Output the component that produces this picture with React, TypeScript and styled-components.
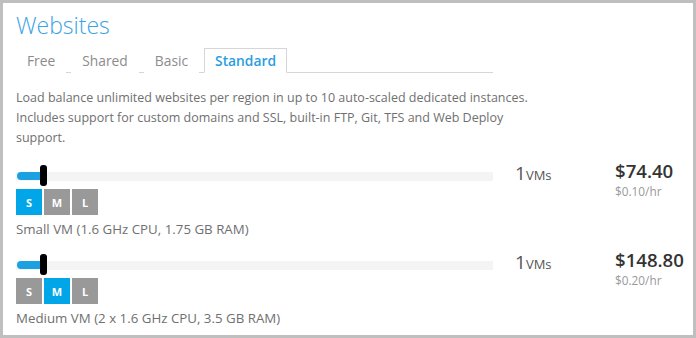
import styled, { createGlobalStyle } from "styled-components";

const GlobalStyle = createGlobalStyle`
	html, body {
		margin: 0;
		padding: 0;
		background: #ffffff;
	}
	body {
		font-family: "Open Sans", "Noto Sans", "Liberation Sans", sans-serif;
	}
`;

interface Plan {
	size: "S" | "M" | "L";
	label: string;
	price: string;
	hourly: string;
}

const plans: Plan[] = [
	{
		size: "S",
		label: "Small VM (1.6 GHz CPU, 1.75 GB RAM)",
		price: "$74.40",
		hourly: "$0.10/hr",
	},
	{
		size: "M",
		label: "Medium VM (2 x 1.6 GHz CPU, 3.5 GB RAM)",
		price: "$148.80",
		hourly: "$0.20/hr",
	},
];

const Panel = styled.div`
	box-sizing: border-box;
	width: 696px;
	height: 338px;
	border: 3px solid #bfbfbf;
	padding: 6px 0 0 13px;
	overflow: hidden;
`;

const Title = styled.h1`
	margin: 0;
	font-size: 23px;
	font-weight: 300;
	line-height: 32px;
	color: #3ba3e4;
`;

const Tabs = styled.ul`
	display: flex;
	gap: 5px;
	list-style: none;
	margin: 7px 0 0;
	padding: 0;
	width: 477px;
	border-bottom: 1px solid #d6d6d6;
`;

const Tab = styled.li<{ $active?: boolean }>`
	box-sizing: border-box;
	height: 25px;
	margin-bottom: -1px;
	padding: 0 10px;
	font-size: 13.8px;
	line-height: 24px;
	font-weight: ${(p) => (p.$active ? 600 : 400)};
	color: ${(p) => (p.$active ? "#2a9de0" : "#8c8c8c")};
	border: 1px solid ${(p) => (p.$active ? "#d6d6d6" : "transparent")};
	border-bottom-color: ${(p) => (p.$active ? "#ffffff" : "transparent")};
	background: #ffffff;
`;

const Description = styled.p`
	margin: 15px 0 0;
	width: 525px;
	font-size: 12.5px;
	line-height: 20px;
	color: #707070;
`;

const Row = styled.div`
	display: flex;
	align-items: flex-start;
	margin-top: 17px;

	& + & {
		margin-top: 16px;
	}
`;

const SliderColumn = styled.div`
	width: 477px;
	display: flex;
	flex-direction: column;
`;

const Slider = styled.div`
	position: relative;
	height: 22px;
	display: flex;
	align-items: center;
`;

const Track = styled.div`
	width: 100%;
	height: 9px;
	background: #f4f4f4;
	display: flex;
	align-items: center;
`;

const Fill = styled.div`
	width: 26px;
	height: 8px;
	margin-left: 1px;
	border-radius: 4px;
	background: #1ba1e2;
`;

const Thumb = styled.div`
	position: absolute;
	left: 24px;
	top: 0;
	width: 7px;
	height: 21px;
	border-radius: 3px;
	background: #000000;
`;

const Sizes = styled.div`
	display: flex;
	gap: 2px;
	margin-top: 2px;
`;

const SizeButton = styled.div<{ $active?: boolean }>`
	width: 26px;
	height: 26px;
	display: flex;
	align-items: center;
	justify-content: center;
	font-size: 11px;
	font-weight: 700;
	color: #ffffff;
	background: ${(p) => (p.$active ? "#00a6e8" : "#999999")};
`;

const VmLabel = styled.div`
	margin-top: 5px;
	font-size: 13.3px;
	line-height: 18px;
	color: #707070;
`;

const Count = styled.div`
	width: 100px;
	margin-left: 22px;
	margin-top: -3px;
	line-height: 22px;
	color: #555555;
	font-size: 13px;
`;

const CountNumber = styled.span`
	font-size: 19px;
	font-weight: 400;
`;

const Price = styled.div`
	display: flex;
	flex-direction: column;
	margin-top: -5px;
`;

const Amount = styled.div`
	font-size: 18.6px;
	font-weight: 600;
	line-height: 22px;
	color: #333333;
`;

const Hourly = styled.div`
	margin-top: 1px;
	font-size: 11.8px;
	line-height: 16px;
	color: #999999;
`;

const PlanRow = ({ plan }: { plan: Plan }) => (
	<Row>
		<SliderColumn>
			<Slider>
				<Track>
					<Fill />
				</Track>
				<Thumb />
			</Slider>
			<Sizes>
				{(["S", "M", "L"] as const).map((s) => (
					<SizeButton key={s} $active={s === plan.size}>
						{s}
					</SizeButton>
				))}
			</Sizes>
			<VmLabel>{plan.label}</VmLabel>
		</SliderColumn>
		<Count>
			<CountNumber>1</CountNumber>VMs
		</Count>
		<Price>
			<Amount>{plan.price}</Amount>
			<Hourly>{plan.hourly}</Hourly>
		</Price>
	</Row>
);

export default function App() {
	return (
		<>
			<GlobalStyle />
			<Panel>
				<Title>Websites</Title>
				<Tabs>
					<Tab>Free</Tab>
					<Tab>Shared</Tab>
					<Tab>Basic</Tab>
					<Tab $active>Standard</Tab>
				</Tabs>
				<Description>
					Load balance unlimited websites per region in up to 10 auto-scaled
					dedicated instances. Includes support for custom domains and SSL,
					built-in FTP, Git, TFS and Web Deploy support.
				</Description>
				{plans.map((plan) => (
					<PlanRow key={plan.size} plan={plan} />
				))}
			</Panel>
		</>
	);
}
